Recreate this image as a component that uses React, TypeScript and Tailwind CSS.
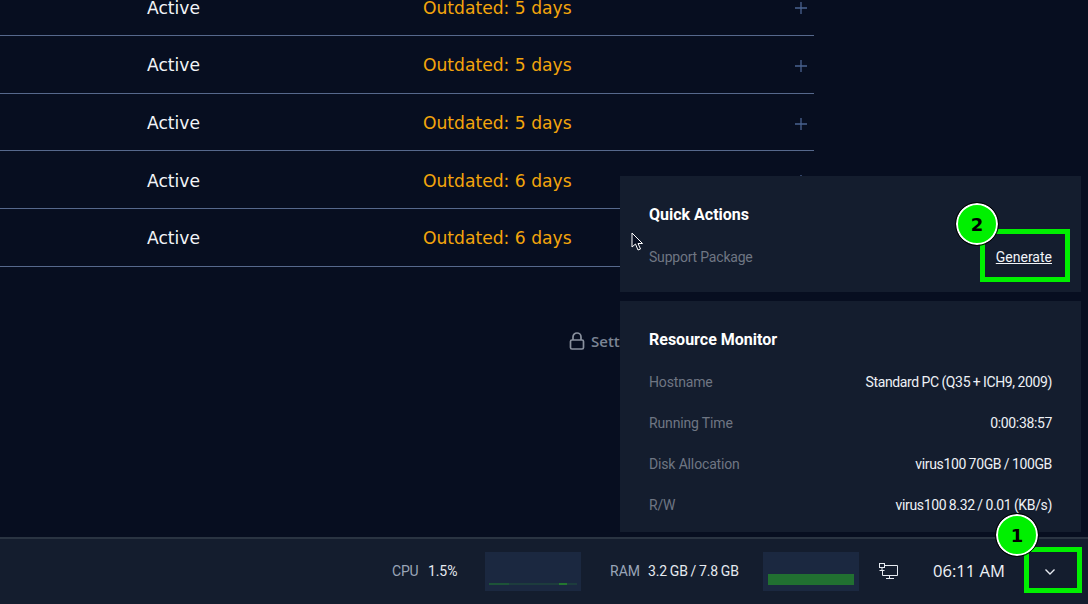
const din = "font-['Roboto',sans-serif]";

const rows = ["5", "5", "5", "6", "6"];

const resources = [
  { label: "Hostname", value: "Standard PC (Q35 + ICH9, 2009)" },
  { label: "Running Time", value: "0:00:38:57" },
  { label: "Disk Allocation", value: "virus100 70GB / 100GB" },
  { label: "R/W", value: "virus100 8.32 / 0.01 (KB/s)" },
];

const Badge = ({ n, className }: { n: number; className: string }) => (
  <div
    className={`absolute flex h-[42px] w-[42px] items-center justify-center rounded-full border-2 border-white bg-[#00f000] font-['DejaVu_Sans',sans-serif] text-[18px] font-bold text-black outline outline-1 outline-black ${className}`}
  >
    {n}
  </div>
);

const TableRow = ({ days }: { days: string }) => (
  <div className="flex h-[57.7px] items-center border-b border-[#56688c] pt-[3px] font-['DejaVu_Sans',sans-serif] text-[17.15px] leading-none">
    <span className="ml-[147px] w-[276px] text-[#f2f4f8]">Active</span>
    <span className="text-[#f3a50c]">Outdated: {days} days</span>
    <svg className="ml-auto mr-[7px]" width="12" height="12" viewBox="0 0 12 12" fill="none" stroke="#4a6390" strokeWidth="1.3">
      <path d="M6 0V12M0 6H12" />
    </svg>
  </div>
);

const App = () => {
  return (
    <div className="relative flex h-[604px] w-[1088px] flex-col overflow-hidden bg-[#070e20]">
      <main className="flex-1 overflow-hidden">
        <div className="-mt-[21.6px] w-[814px]">
          {rows.map((d, i) => (
            <TableRow key={i} days={d} />
          ))}
        </div>
        <div className="mt-[63px] flex items-center gap-[6px] pl-[569px] font-['Open_Sans',sans-serif] text-[15px] font-semibold text-[#7b8494]">
          <svg width="16" height="18" viewBox="0 0 16 18" fill="none" stroke="#8a919e" strokeWidth="1.7">
            <rect x="1.5" y="8" width="13" height="9" rx="1.5" />
            <path d="M4 8V5a4 4 0 0 1 8 0v3" />
          </svg>
          <span>Settings</span>
        </div>
      </main>

      <footer className={`flex h-[67px] shrink-0 items-center border-t-2 border-[#2a3442] bg-[#141d2e] text-[14px] ${din}`}>
        <span className="ml-[392px] w-[36px] tracking-[-0.2px] text-[#9aa5b8]">CPU</span>
        <span className="w-[57px] tracking-[-0.1px] text-[#e6eaf0]">1.5%</span>
        <div className="flex h-[39px] w-[96px] items-end bg-[#1b2840] px-[4px] pb-[6px]">
          <svg width="88" height="4" viewBox="0 0 88 4" fill="none">
            <path d="M0 3H88" stroke="#20503a" strokeWidth="1" />
            <path d="M0 3H20" stroke="#1f6a35" strokeWidth="1" />
            <path d="M70 3H78" stroke="#23772f" strokeWidth="2" />
          </svg>
        </div>
        <span className="ml-[29px] w-[38px] text-[#9aa5b8]">RAM</span>
        <span className="w-[115px] tracking-[-0.15px] [word-spacing:-0.5px] text-[#e6eaf0]">3.2 GB / 7.8 GB</span>
        <div className="flex h-[39px] w-[96px] items-end bg-[#1b2840] pb-[6px] pl-[5px]">
          <div className="h-[11px] w-[86px] bg-[#217031]" />
        </div>
        <svg className="ml-[20px]" width="19" height="17" viewBox="0 0 19 17" fill="none" stroke="#e6eaf0" strokeWidth="1">
          <path d="M6 2.5H18.5V12.5H3.5V7" />
          <rect x="0.5" y="0.5" width="5" height="4" />
          <path d="M3 4.5V7M0.5 7.5H5.5M10.5 12.5V15.5M7 15.5H15" />
        </svg>
        <span className="ml-[35px] font-['Open_Sans',sans-serif] text-[16.6px] text-[#eef1f6]">06:11 AM</span>
        <svg className="ml-[39px]" width="12" height="8" viewBox="0 0 12 8" fill="none" stroke="#e6eaf0" strokeWidth="1.4">
          <path d="M1.5 1.5L6 6L10.5 1.5" />
        </svg>
      </footer>

      {/* slide-out panels over the table */}
      <div className={`absolute left-[620px] top-[176px] flex w-[461px] flex-col gap-[9px] ${din}`}>
        <section className="h-[116px] bg-[#141d2e] px-[29px] pt-[30px]">
          <h2 className="text-[16px] font-bold leading-[18px] text-white">Quick Actions</h2>
          <div className="mt-[24px] flex items-center justify-between text-[14px] leading-[18px]">
            <span className="tracking-[-0.2px] text-[#6f7683]">Support Package</span>
            <a className="text-[#f2f4f8] underline">Generate</a>
          </div>
        </section>
        <section className="flex h-[231px] flex-col bg-[#141d2e] px-[29px] pt-[30px]">
          <h2 className="text-[16px] font-bold leading-[18px] text-white">Resource Monitor</h2>
          <div className="mt-[13px] flex flex-col">
            {resources.map((r) => (
              <div key={r.label} className="flex h-[41px] items-center justify-between text-[14px]">
                <span className="tracking-[-0.15px] text-[#6f7683]">{r.label}</span>
                <span className="tracking-[-0.35px] [word-spacing:-0.5px] text-[#eef1f6]">{r.value}</span>
              </div>
            ))}
          </div>
        </section>
      </div>

      {/* cursor */}
      <svg className="absolute left-[631px] top-[232px]" width="13" height="20" viewBox="0 0 13 20">
        <path d="M1 1V15L4.5 12L7 18L9.5 17L7 11.5H11.5Z" fill="#060d20" stroke="#fff" strokeWidth="1" />
      </svg>

      {/* annotations */}
      <div className="absolute left-[980px] top-[229px] h-[53px] w-[90px] border-[5px] border-[#00f000]" />
      <Badge n={2} className="left-[956px] top-[203px]" />
      <div className="absolute left-[1024px] top-[547px] h-[46px] w-[58px] border-[5px] border-[#00f000]" />
      <Badge n={1} className="left-[996px] top-[514px]" />
    </div>
  );
};

export default App;
